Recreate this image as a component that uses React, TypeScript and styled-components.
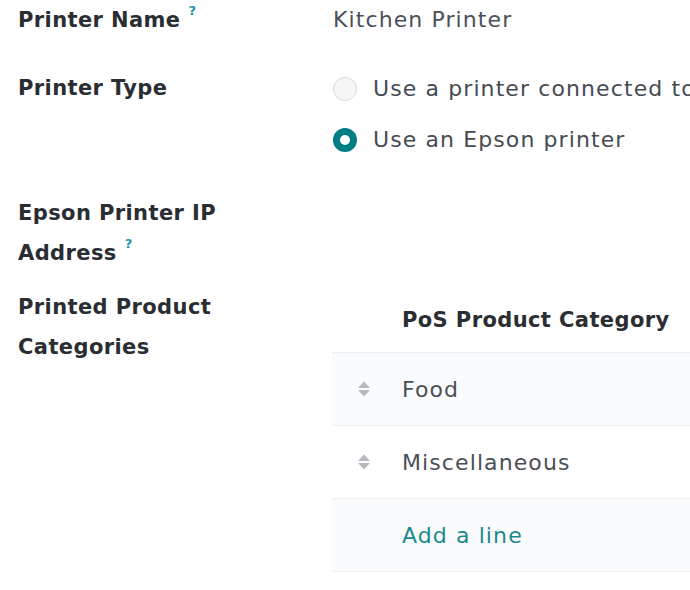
import React from 'react';
import styled, { createGlobalStyle } from 'styled-components';

const GlobalStyle = createGlobalStyle`
  html, body {
    margin: 0;
    padding: 0;
    background: #ffffff;
    overflow: hidden;
  }
  body {
    font-family: "DejaVu Sans", "Open Sans", sans-serif;
    font-size: 22px;
    color: #2b2f33;
  }
`;

const Form = styled.div`
  width: 690px;
  height: 590px;
  padding-left: 18px;
  box-sizing: border-box;
  overflow: hidden;
`;

const Field = styled.div<{ $gap: number }>`
  display: flex;
  align-items: flex-start;
  margin-bottom: ${(p) => p.$gap}px;
`;

const Label = styled.div`
  width: 315px;
  flex: none;
  font-size: 21px;
  font-weight: 700;
  line-height: 40px;
  color: #2a2e33;
  letter-spacing: 0.4px;
`;

const Help = styled.sup`
  font-size: 13px;
  font-weight: 700;
  color: #1c94a6;
  margin-left: 8px;
  vertical-align: top;
  position: relative;
  top: -9px;
`;

const Value = styled.div`
  flex: 1;
  min-width: 0;
  line-height: 40px;
  color: #4b5057;
  white-space: nowrap;
  letter-spacing: 1.1px;
`;

const RadioList = styled.div`
  display: flex;
  flex-direction: column;
  gap: 11px;
  padding-top: 1px;
  overflow: hidden;
  flex: 1;
  min-width: 0;
`;

const RadioRow = styled.label`
  display: flex;
  align-items: center;
  gap: 16px;
  line-height: 40px;
  color: #454b53;
  white-space: nowrap;
  letter-spacing: 1.1px;
`;

const RadioDot = styled.span<{ $checked?: boolean }>`
  width: 24px;
  height: 24px;
  flex: none;
  border-radius: 50%;
  box-sizing: border-box;
  background: ${(p) => (p.$checked ? '#017e84' : '#f7f7f7')};
  border: ${(p) => (p.$checked ? 'none' : '1.5px solid #d6d8db')};
  display: flex;
  align-items: center;
  justify-content: center;

  &::after {
    content: '';
    display: ${(p) => (p.$checked ? 'block' : 'none')};
    width: 10px;
    height: 10px;
    border-radius: 50%;
    background: #ffffff;
  }
`;

const Table = styled.div`
  flex: 1;
  min-width: 0;
  margin-left: -1px;
`;

const HeaderCell = styled.div`
  height: 66px;
  padding-left: 70px;
  display: flex;
  align-items: center;
  padding-top: 1px;
  box-sizing: border-box;
  font-size: 21px;
  font-weight: 700;
  color: #2a2e33;
  border-bottom: 1px solid #eceef0;
  white-space: nowrap;
  letter-spacing: 0.4px;
`;

const Row = styled.div<{ $striped?: boolean }>`
  height: 72px;
  display: flex;
  align-items: center;
  background: ${(p) => (p.$striped ? '#fafbfc' : '#ffffff')};
  border-bottom: 1px solid #eceef0;
  color: #4a4f56;
  white-space: nowrap;
  letter-spacing: 1.1px;
`;

const Handle = styled.span`
  width: 70px;
  flex: none;
  display: flex;
  justify-content: center;
  padding-right: 6px;
  box-sizing: border-box;
`;

const AddLink = styled.span`
  color: #1a8a8e;
`;

const SortIcon = () => (
  <svg width="14" height="18" viewBox="0 0 14 18">
    <path d="M7 1.5 L13 8 H1 Z" fill="#b6b9bd" />
    <path d="M7 16.5 L13 10 H1 Z" fill="#b6b9bd" />
  </svg>
);

export default function App() {
  const categories = ['Food', 'Miscellaneous'];
  return (
    <>
      <GlobalStyle />
      <Form>
        <Field $gap={28}>
          <Label>
            Printer Name<Help>?</Help>
          </Label>
          <Value>Kitchen Printer</Value>
        </Field>

        <Field $gap={33}>
          <Label>Printer Type</Label>
          <RadioList>
            <RadioRow>
              <RadioDot />
              Use a printer connected to
            </RadioRow>
            <RadioRow>
              <RadioDot $checked />
              Use an Epson printer
            </RadioRow>
          </RadioList>
        </Field>

        <Field $gap={14}>
          <Label>
            Epson Printer IP
            <br />
            Address<Help>?</Help>
          </Label>
          <Value />
        </Field>

        <Field $gap={0}>
          <Label>
            Printed Product
            <br />
            Categories
          </Label>
          <Table>
            <HeaderCell>PoS Product Category</HeaderCell>
            {categories.map((c, i) => (
              <Row key={c} $striped={i % 2 === 0}>
                <Handle>
                  <SortIcon />
                </Handle>
                {c}
              </Row>
            ))}
            <Row $striped>
              <Handle />
              <AddLink>Add a line</AddLink>
            </Row>
          </Table>
        </Field>
      </Form>
    </>
  );
}
